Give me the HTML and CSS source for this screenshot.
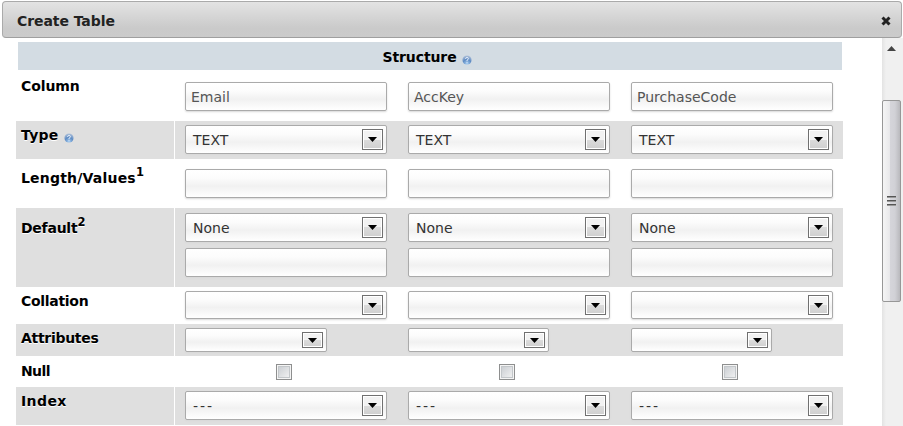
FILE: index.html
```
<!DOCTYPE html>
<html lang="en">
<head>
<meta charset="utf-8">
<title>Create Table</title>
<link rel="stylesheet" href="styles.css">
</head>
<body>
<header class="titlebar"><span>Create Table</span>
<svg class="close" width="10" height="10" viewBox="0 0 10 10"><path d="M1.5 1.5 8.5 8.5M8.5 1.5 1.5 8.5" stroke="#222" stroke-width="3"/></svg></header>
<div class="content">
<main class="panel">
<div class="structure"><span>Structure</span><svg class="help" viewBox="0 0 10 10"><use href="#help"/></svg></div>
<div id="rows"></div>
</main>
<aside class="scrollbar">
<svg class="up" width="9" height="5" viewBox="0 0 9 5"><path d="M0 5 4.5 0 9 5Z" fill="#444"/></svg>
<div class="thumb"><i></i><i></i><i></i></div>
</aside>
</div>
<svg class="defs" width="0" height="0"><defs>
<radialGradient id="ball" cx=".5" cy=".9" r=".9"><stop offset="0" stop-color="#a9d0f3"/><stop offset=".5" stop-color="#5f8cc4"/><stop offset="1" stop-color="#b4c4da"/></radialGradient>
<g id="help"><circle cx="5" cy="5" r="4.6" fill="url(#ball)"/><path d="M3.5 3.9Q3.6 2.5 5 2.5Q6.5 2.5 6.5 3.7Q6.5 4.6 5 5.1V6M5 6.8V7.8" fill="none" stroke="#e5eefa" stroke-width="1"/></g>
</defs></svg>
<script src="rows.js"></script>
</body>
</html>
```
FILE: styles.css
```
* { box-sizing: border-box; }
body { margin: 0; height: 426px; overflow: hidden; background: #fff; color: #000; font: 14px "DejaVu Sans", sans-serif; }
.titlebar { display: flex; align-items: center; justify-content: space-between; height: 37px; margin: 1px 1px 0 2px; padding: 2px 10px 0 14px; border: 1px solid #aaa; border-bottom-color: #9f9f9f; border-radius: 4px; background: linear-gradient(#e3e3e3, #cacaca 75%, #cbcbcb); color: #222; font-weight: bold; }
.titlebar span { letter-spacing: -.07px; }
.close { display: block; }
.content { display: flex; justify-content: space-between; height: 388px; }
.panel { width: 827px; margin-left: 16px; padding-top: 4px; }
.structure { display: flex; align-items: center; justify-content: center; gap: 5px; height: 28px; margin: 0 1px 0 2px; padding: 1px 6px 0 0; background: #d3dce3; font-weight: bold; letter-spacing: -.1px; }
.help { width: 10px; height: 10px; }
.structure .help { margin-top: 7px; }
.row { display: grid; grid-template-columns: 158px 668px; column-gap: 1px; }
.row.odd > div { background: #dfdfdf; }
.label { padding-left: 5px; font-weight: bold; line-height: 18px; letter-spacing: -.1px; text-shadow: 0 1px 0 #fff; }
.type .label { letter-spacing: .25px; }
.length-values .label { letter-spacing: .2px; }
.default .label { letter-spacing: -.25px; }
.attributes .label, .collation .label { letter-spacing: -.3px; }
.null .label { letter-spacing: -.6px; }
.index .label { letter-spacing: .4px; }
.label .help { margin: 0 0 -3px 5px; }
.label sup { font-size: 11.5px; line-height: 0; vertical-align: 7px; }
.cells { display: grid; grid-template-columns: repeat(3, 202px); column-gap: 21px; padding-left: 10px; align-content: start; }
.cell { display: flex; flex-direction: column; gap: 6px; }
.field { display: flex; align-items: center; justify-content: space-between; width: 202px; height: 29px; padding: 2px 3px 1px 5px; border: 1px solid #aaa; border-radius: 2px; background: linear-gradient(#fff, #fcfcfc 30%, #f1f1f1 60%, #fff); box-shadow: 0 1px 2px #d8d8d8; color: #555; }
.field.select { padding: 0 3px 0 7px; color: #333; }
.index .field span { letter-spacing: 1.9px; }
.arrow { display: flex; align-items: center; justify-content: center; width: 21px; height: 21px; border: 1px solid #707070; background: linear-gradient(#f2f2f2 0 50%, #dcdcdc 50%, #cfcfcf); box-shadow: inset 0 0 0 1px #fff; }
.collation .field { height: 28px; }
.collation .arrow { height: 20px; }
.attributes .field { width: 142px; height: 24px; }
.attributes .cell + .cell .field { width: 141px; }
.attributes .arrow { height: 16px; }
.check { width: 16px; height: 16px; margin-left: 91px; border: 1px solid #8e8f8f; box-shadow: inset 0 0 0 1px #f4f4f4, inset 0 0 0 2px #c3c7ca; background: linear-gradient(135deg, #c5c9ce, #f6f6f6); }
.scrollbar { display: flex; flex-direction: column; align-items: center; width: 21px; background: linear-gradient(90deg, #e3e3e3, #f0f0f0 4px, #f0f0f0); }
.up { display: block; margin: 8px 3px 0 0; }
.thumb { display: flex; flex-direction: column; align-items: center; justify-content: center; gap: 2px; width: 19px; height: 202px; margin-top: 49px; margin-right: 2px; border: 1px solid #979797; border-radius: 2px; background: linear-gradient(90deg, #f5f5f5 0, #e9e9eb 38%, #d5d5da 42%, #d1d1d6 70%, #b9b9bd); }
.thumb i { width: 9px; height: 2px; border-top: 1px solid #555; border-bottom: 1px solid #999; }
.defs { display: block; }
```
FILE: rows.js
```
const rows = [
  { name: 'Column', h: 51, label: 7, top: 12, fields: [['text', ['Email', 'AccKey', 'PurchaseCode']]] },
  { name: 'Type', h: 38, label: 5, top: 4, help: true, fields: [['select', ['TEXT', 'TEXT', 'TEXT']]] },
  { name: 'Length/Values', note: 1, h: 49, label: 10, top: 10, fields: [['text', ['', '', '']]] },
  { name: 'Default', note: 2, h: 79, label: 11, top: 5, fields: [['select', ['None', 'None', 'None']], ['text', ['', '', '']]] },
  { name: 'Collation', h: 37, label: 5, top: 4, fields: [['select', ['', '', '']]] },
  { name: 'Attributes', h: 32, label: 5, top: 4, fields: [['select', ['', '', '']]] },
  { name: 'Null', h: 31, label: 6, top: 8, fields: [['check', ['', '', '']]] },
  { name: 'Index', h: 38, label: 5, top: 4, fields: [['select', ['---', '---', '---']]] }
];
const arrow = '<div class="arrow"><svg width="9" height="5" viewBox="0 0 9 5"><path d="M0 0H9L4.5 5Z"/></svg></div>';
const field = (type, value) => type === 'check'
  ? '<div class="check"></div>'
  : `<div class="field ${type}"><span>${value}</span>${type === 'select' ? arrow : ''}</div>`;
document.getElementById('rows').innerHTML = rows.map((r, i) => `
  <div class="row ${i % 2 ? 'odd' : ''} ${r.name.toLowerCase().replace('/', '-')}" style="height:${r.h}px">
    <div class="label" style="padding-top:${r.label}px">${r.name}${r.note ? `<sup>${r.note}</sup>` : ''}${r.help ? '<svg class="help" viewBox="0 0 10 10"><use href="#help"/></svg>' : ''}</div>
    <div class="cells" style="padding-top:${r.top}px">${[0, 1, 2].map(c => `<div class="cell">${r.fields.map(f => field(f[0], f[1][c])).join('')}</div>`).join('')}</div>
  </div>`).join('');
```
